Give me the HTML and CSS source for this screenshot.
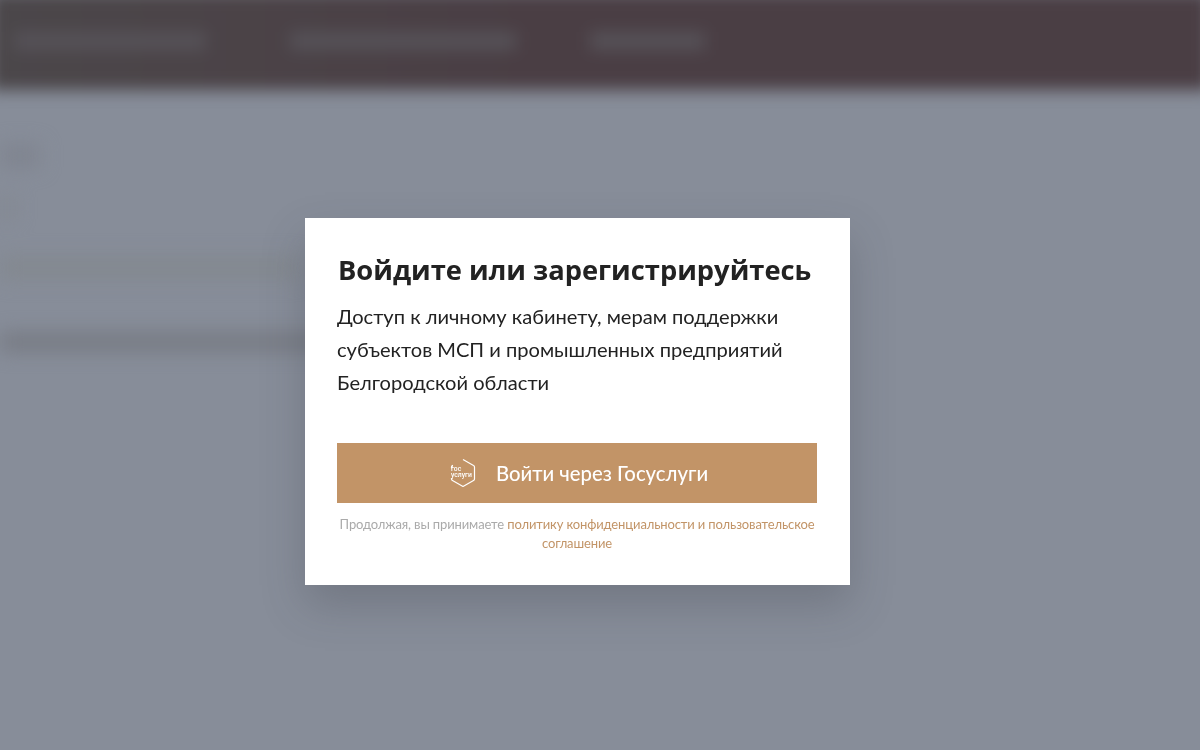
FILE: index.html
```html
<!DOCTYPE html>
<html lang="en">
<head>
    <meta charset="UTF-8">
    <title>Вход</title>
    <link rel="stylesheet" href="styles.css">
</head>
<body>
    <div class="backdrop">
        <div class="top-bar">
            <div class="nav-blur nav-one"></div>
            <div class="nav-blur nav-two"></div>
            <div class="nav-blur nav-three"></div>
        </div>
        <div class="page-blur">
            <div class="blur-line line-one"></div>
            <div class="blur-line line-two"></div>
            <div class="blur-line line-three"></div>
            <div class="blur-line line-four"></div>
        </div>
    </div>
    <div class="overlay">
        <div class="modal">
            <h1>Войдите или зарегистрируйтесь</h1>
            <p class="lead">Доступ к личному кабинету, мерам поддержки субъектов МСП и промышленных предприятий Белгородской области</p>
            <a class="login-btn" href="#">
                <svg class="gos-icon" width="26" height="30" viewBox="0 0 26 30">
                    <path d="M13 1.5 23.5 7.5Q24.5 8 24.5 9V21Q24.5 22 23.5 22.5L13 28.5 2.5 22.5Q1.5 22 1.5 21V20M1.5 10V9Q1.5 8 2.5 7.5Z" fill="none" stroke="#fff" stroke-width="1.2" stroke-linejoin="round"/>
                    <text class="gos-text"><tspan x="1" y="13">гос</tspan><tspan x="1" y="19">услуги</tspan></text>
                </svg>
                <span>Войти через Госуслуги</span>
            </a>
            <p class="terms">Продолжая, вы принимаете <a href="#">политику конфиденциальности и пользовательское соглашение</a></p>
        </div>
    </div>
</body>
</html>
```

FILE: styles.css
```css
body {
    margin: 0;
    height: 750px;
    overflow: hidden;
    background: #878d99;
    font-family: Lato, sans-serif;
    color: #222;
}
.backdrop {
    height: 750px;
    overflow: hidden;
}
.top-bar {
    height: 98px;
    margin: -8px -10px 0;
    background: linear-gradient(90deg, #4b474a 0%, #4a3e44 45%, #4a3e44 100%);
    display: flex;
    align-items: center;
    padding: 0 0 0 24px;
    box-sizing: border-box;
    filter: blur(8px);
}
.nav-blur {
    height: 18px;
    background: #565258;
}
.nav-one {
    width: 192px;
    margin-right: 84px;
}
.nav-two {
    width: 226px;
    margin-right: 74px;
}
.nav-three {
    width: 115px;
}
.page-blur {
    display: flex;
    flex-direction: column;
    filter: blur(10px);
}
.blur-line {
    background: #7f848f;
}
.line-one {
    width: 40px;
    height: 22px;
    margin-top: 55px;
}
.line-two {
    width: 14px;
    height: 22px;
    margin-top: 30px;
    background: #82878f;
}
.line-three {
    width: 300px;
    height: 22px;
    margin-top: 38px;
    background: #83888f;
}
.line-four {
    width: 330px;
    height: 16px;
    margin-top: 55px;
    background: #74777f;
}
.overlay {
    position: fixed;
    inset: 0;
    padding: 218px 0 0 305px;
    box-sizing: border-box;
}
.modal {
    width: 545px;
    height: 367px;
    box-sizing: border-box;
    padding: 32px 33px 0 32px;
    background: #fff;
    box-shadow: 0 20px 40px rgba(60, 64, 75, 0.28);
}
h1 {
    margin: 0 0 10px 1px;
    font-family: "Open Sans", sans-serif;
    font-size: 27.3px;
    line-height: 40px;
    font-weight: 700;
    color: #222;
    white-space: nowrap;
}
.lead {
    margin: 0 0 44px;
    font-size: 20.1px;
    line-height: 33px;
    color: #222;
}
.login-btn {
    display: flex;
    align-items: center;
    justify-content: center;
    gap: 20px;
    height: 60px;
    padding-left: 4px;
    background: #c29467;
    color: #fff;
    text-decoration: none;
    font-size: 20.3px;
    font-weight: 500;
}
.gos-icon {
    display: block;
}
.gos-text {
    font-family: Roboto, sans-serif;
    font-size: 6.8px;
    fill: #fff;
}
.terms {
    margin: 12px -4px 0;
    text-align: center;
    font-size: 13px;
    letter-spacing: -0.13px;
    line-height: 19px;
    color: #aaa;
}
.terms a {
    color: #c29467;
    text-decoration: none;
}
```
